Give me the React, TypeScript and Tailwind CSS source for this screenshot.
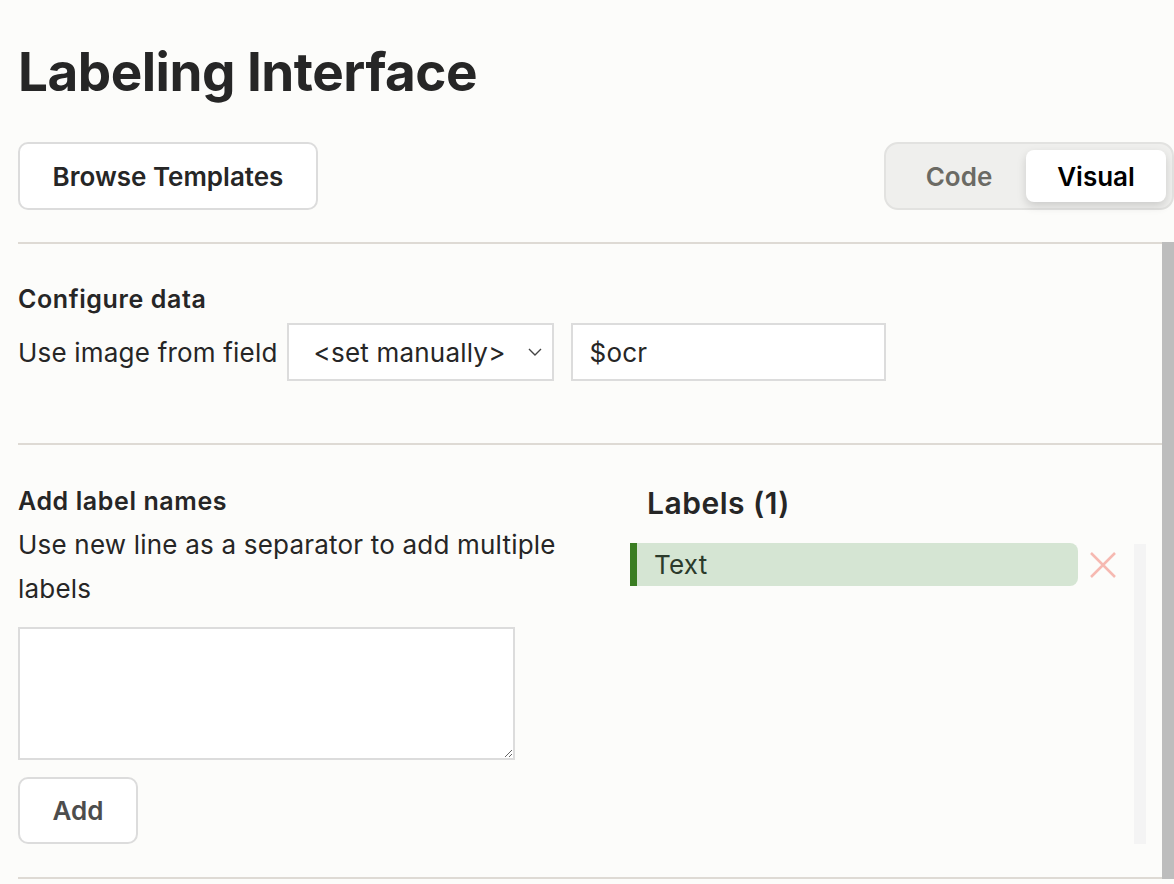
import React, { useState } from "react";

const font = { fontFamily: "Inter, 'Noto Sans', sans-serif" };

const LabelRow = ({ name, onRemove }: { name: string; onRemove: () => void }) => (
  <div className="flex items-center">
    <div className="flex-1 h-[43px] flex items-center bg-[#d5e5d3] border-l-[7px] border-[#3a7d22] rounded-r-lg pl-[17px] text-[26px] tracking-[0.2px] text-[#2b3a2b]">
      {name}
    </div>
    <button onClick={onRemove} className="w-[50px] flex justify-center items-center text-[#f6b9b1]">
      <svg width="28" height="28" viewBox="0 0 28 28" fill="none" stroke="currentColor" strokeWidth="2.5">
        <path d="M2 2 L26 26 M26 2 L2 26" />
      </svg>
    </button>
  </div>
);

export default function App() {
  const [mode, setMode] = useState("visual");
  const [labels, setLabels] = useState<string[]>(["Text"]);
  const [draft, setDraft] = useState("");

  const addLabels = () => {
    const items = draft.split("\n").map((s) => s.trim()).filter(Boolean);
    if (!items.length) return;
    setLabels([...labels, ...items]);
    setDraft("");
  };

  return (
    <div className="min-h-[884px] bg-[#fcfcfa] text-[#262626] overflow-hidden" style={font}>
      <h1 className="pl-[18px] pt-[40px] text-[53px] font-bold leading-[64px] tracking-[-0.5px]">
        Labeling Interface
      </h1>

      <div className="flex items-center justify-between pl-[18px] mt-[38px]">
        <button className="h-[68px] w-[300px] bg-white border-2 border-[#dcdcdc] rounded-[10px] text-[26px] font-semibold">
          Browse Templates
        </button>
        <div className="h-[68px] w-[290px] flex items-center bg-[#efefed] border-2 border-[#e2e2e0] rounded-[14px] pl-[6px] pr-[6px]">
          {["code", "visual"].map((m) => (
            <button
              key={m}
              onClick={() => setMode(m)}
              className={`h-[52px] rounded-[8px] text-[26px] font-semibold ${
                m === "code" ? "w-[135px]" : "w-[141px]"
              } ${
                mode === m
                  ? "bg-white text-black shadow-[0_4px_10px_rgba(0,0,0,0.15)]"
                  : "text-[#6b6a64]"
              }`}
            >
              {m === "code" ? "Code" : "Visual"}
            </button>
          ))}
        </div>
      </div>

      <div className="flex mt-[32px]">
        <div className="flex-1 pl-[18px]">
          <div className="h-[2px] bg-[#dedad4]" />

          <div className="pt-[40px] pb-[62px]">
            <div className="text-[25px] font-semibold leading-[30px] tracking-[0.6px]">Configure data</div>
            <div className="flex items-center mt-[9px] text-[26px] tracking-[0.2px]">
              <span className="mr-[9px]">Use image from field</span>
              <div className="h-[58px] w-[267px] bg-white border-2 border-[#dcdcdc] flex items-center justify-between pl-[25px] pr-[9px]">
                <span>&lt;set manually&gt;</span>
                <svg width="16" height="16" viewBox="0 0 16 16" fill="none" stroke="#444" strokeWidth="1.4">
                  <path d="M2 5 L8 11 L14 5" />
                </svg>
              </div>
              <input
                defaultValue="$ocr"
                className="ml-[17px] h-[58px] w-[315px] bg-white border-2 border-[#dcdcdc] pl-[17px] outline-none"
              />
            </div>
          </div>

          <div className="h-[2px] bg-[#dedad4]" />

          <div className="flex pt-[41px] pb-[33px]">
            <div className="w-[612px]">
              <div className="text-[25px] font-semibold leading-[30px] tracking-[0.6px]">Add label names</div>
              <p className="text-[26px] tracking-[0.2px] leading-[44px] mt-[7px] w-[560px]">
                Use new line as a separator to add multiple labels
              </p>
              <textarea
                value={draft}
                onChange={(e) => setDraft(e.target.value)}
                className="block mt-[16px] w-[497px] h-[133px] bg-white border-2 border-[#dcdcdc] outline-none p-2 text-[20px]"
              />
              <button
                onClick={addLabels}
                className="mt-[17px] h-[67px] w-[120px] bg-white border-2 border-[#dcdcdc] rounded-[10px] text-[26px] font-semibold text-[#4d4d4d]"
              >
                Add
              </button>
            </div>
            <div className="flex-1 pr-[16px]">
              <div className="pl-[17px] text-[30px] font-semibold leading-[34px] tracking-[0.5px]">
                Labels ({labels.length})
              </div>
              <div className="flex mt-[23px]">
                <div className="flex-1 flex flex-col gap-2">
                  {labels.map((l, i) => (
                    <LabelRow key={i} name={l} onRemove={() => setLabels(labels.filter((_, j) => j !== i))} />
                  ))}
                </div>
                <div className="w-[12px] h-[300px] bg-[#f4f4f4] mt-[1px] ml-[6px]" />
              </div>
            </div>
          </div>

          <div className="h-[2px] bg-[#dedad4]" />
        </div>
        <div className="w-[12px] bg-[#bdbdbd]" />
      </div>
    </div>
  );
}
